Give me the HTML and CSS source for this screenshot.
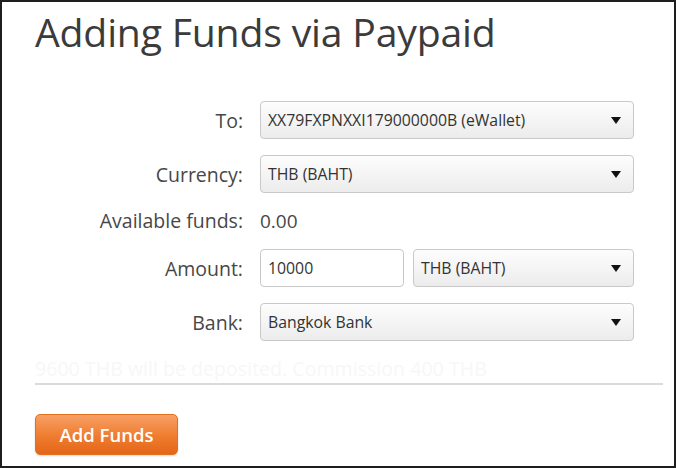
FILE: index.html
```html
<!DOCTYPE html>
<html lang="en">
<head>
    <meta charset="UTF-8">
    <meta name="viewport" content="width=device-width, initial-scale=1.0">
    <title>Adding Funds via Paypaid</title>
    <link rel="stylesheet" href="styles.css">
</head>
<body>
    <div class="panel">
        <h1>Adding Funds via Paypaid</h1>
        <form class="fund-form">
            <label class="label">To:</label>
            <div class="select"><span>XX79FXPNXXI179000000B (eWallet)</span><i class="arrow"></i></div>

            <label class="label">Currency:</label>
            <div class="select"><span>THB (BAHT)</span><i class="arrow"></i></div>

            <label class="label text-row">Available funds:</label>
            <div class="value text-row">0.00</div>

            <label class="label">Amount:</label>
            <div class="pair">
                <div class="input">10000</div>
                <div class="select"><span>THB (BAHT)</span><i class="arrow"></i></div>
            </div>

            <label class="label">Bank:</label>
            <div class="select"><span>Bangkok Bank</span><i class="arrow"></i></div>
        </form>
        <p class="note">9600 THB will be deposited. Commission 400 THB</p>
        <hr class="divider">
        <button type="button" class="btn-add">Add Funds</button>
    </div>
</body>
</html>
```

FILE: styles.css
```css
html, body {
    margin: 0;
    background: #ffffff;
}
.panel {
    box-sizing: border-box;
    width: 676px;
    height: 468px;
    border: 2px solid #1e1e1e;
    padding: 0 11px 0 33px;
    font-family: 'Open Sans', sans-serif;
    color: #444444;
}
h1 {
    margin: 4px 0 0 0;
    font-size: 39.2px;
    font-weight: 400;
    line-height: 52px;
    color: #3b3b3b;
    letter-spacing: -0.2px;
}
.fund-form {
    display: grid;
    grid-template-columns: 208px 374px;
    column-gap: 17px;
    row-gap: 16px;
    margin-top: 43px;
    align-items: center;
}
.label {
    text-align: right;
    font-size: 19.5px;
    color: #474747;
}
.text-row {
    line-height: 24px;
}
.value {
    font-size: 19px;
    color: #474747;
}
.select, .input {
    box-sizing: border-box;
    height: 38px;
    border: 1px solid #c9c9c9;
    border-radius: 4px;
    display: flex;
    align-items: center;
    padding: 0 12px 0 7px;
    font-size: 15.8px;
    color: #333333;
}
.select {
    justify-content: space-between;
    background: linear-gradient(#fdfdfd, #ececec);
}
.input {
    background: #ffffff;
}
.arrow {
    width: 0;
    height: 0;
    border-left: 5px solid transparent;
    border-right: 5px solid transparent;
    border-top: 7px solid #111111;
}
.pair {
    display: grid;
    grid-template-columns: 144px 1fr;
    column-gap: 9px;
}
.note {
    margin: 18px 0 0 0;
    font-size: 19.6px;
    line-height: 20px;
    color: #f7f7f7;
}
.divider {
    margin: 4px 0 0 0;
    border: 0;
    border-top: 2px solid #dadada;
}
.btn-add {
    margin-top: 29px;
    width: 143px;
    height: 41px;
    border: 1px solid #e1701f;
    border-radius: 5px;
    background: linear-gradient(#f8a066, #ef7c2e 55%, #e3661a);
    color: #ffffff;
    font-family: 'Open Sans', sans-serif;
    font-size: 18.5px;
    font-weight: 600;
    box-shadow: 0 1px 2px rgba(0, 0, 0, 0.15);
}
```
